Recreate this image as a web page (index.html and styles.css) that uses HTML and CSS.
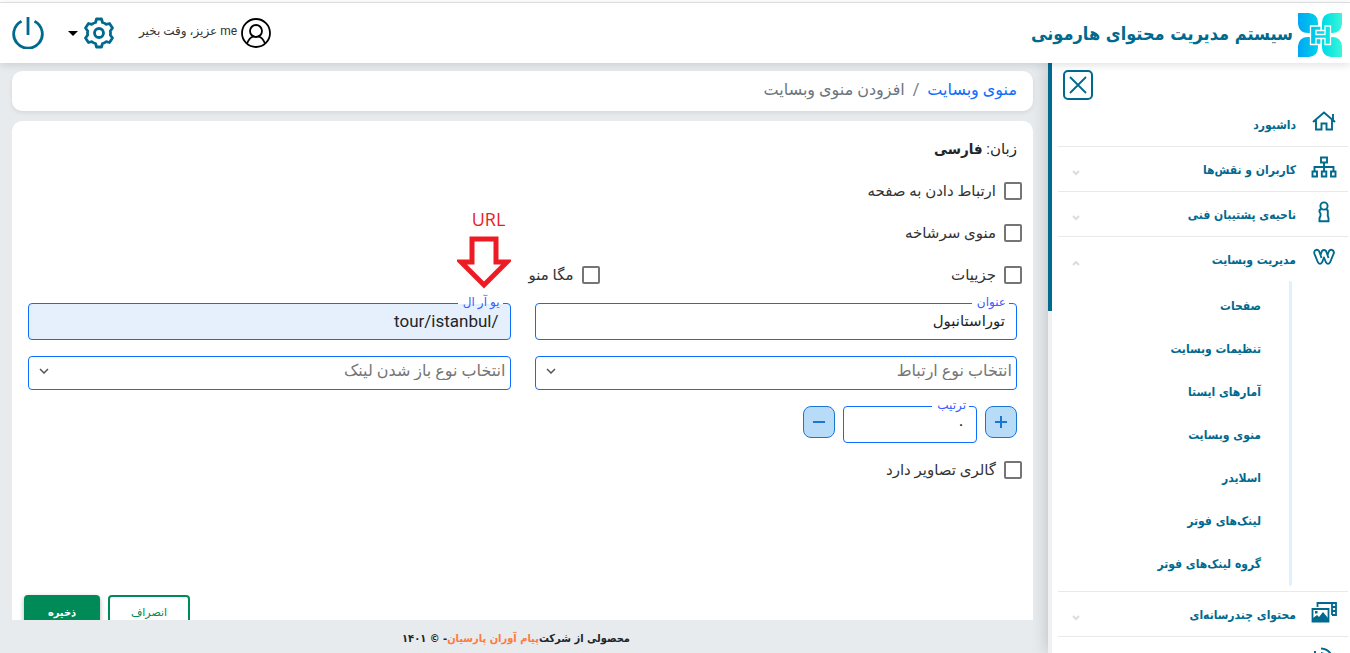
FILE: index.html
```html
<!DOCTYPE html>
<html lang="fa" dir="rtl">
<head>
    <meta charset="UTF-8">
    <meta name="viewport" content="width=device-width, initial-scale=1.0">
    <title>سیستم مدیریت محتوای هارمونی</title>
    <link rel="stylesheet" href="styles.css">
</head>
<body>
    <header class="topbar">
        <div class="brand">
            <svg class="brand-logo" viewBox="0 0 44 44" aria-hidden="true">
                <defs>
                    <linearGradient id="logoFill" gradientUnits="userSpaceOnUse" x1="0" x2="44" y1="0" y2="0">
                        <stop offset="0" stop-color="#00a6f5"/>
                        <stop offset="0.6" stop-color="#00dfe4"/>
                        <stop offset="1" stop-color="#3df5d8"/>
                    </linearGradient>
                </defs>
                <path fill="url(#logoFill)" d="M0 0H11Q20 1 20 10V20H10Q1 20 0 11ZM44 0H33Q24 1 24 10V20H34Q43 20 44 11ZM0 44H11Q20 43 20 34V24H10Q1 24 0 33ZM44 44H33Q24 43 24 34V24H34Q43 24 44 33Z"/>
                <path fill="url(#logoFill)" stroke="#fff" stroke-width="1.300" d="M12.500 13H23V17.500H27V13H32.500V31.500H27V25.500H23V31.500H12.500Z"/>
                <path fill="none" stroke="#fff" stroke-width="1.300" d="M23 17.500H18V21.500H27V17.500M18 31V25.500H23"/>
            </svg>
            <h1 class="brand-title">سیستم مدیریت محتوای هارمونی</h1>
        </div>
        <div class="user-tools">
            <div class="user">
                <svg class="user-icon" viewBox="0 0 30 30" fill="none" stroke="#000" stroke-width="1.800" aria-hidden="true">
                    <circle cx="15" cy="15" r="14"/>
                    <circle cx="15" cy="13" r="6"/>
                    <path d="M6 25.500C8 20.500 10.500 18.800 12.500 18.300M24 25.500C22 20.500 19.500 18.800 17.500 18.300"/>
                </svg>
                <span class="user-name">me عزیز، وقت بخیر</span>
            </div>
            <button class="icon-button settings" type="button" aria-label="تنظیمات">
                <svg class="gear" viewBox="0 0 32 32" fill="none" stroke="#006a8e" stroke-width="2.800" stroke-linejoin="round" aria-hidden="true">
                    <path d="M13.500 2H18.500L19.500 5.500Q21.500 6 23 7.300L26.500 6.500L29.500 11L27.300 14Q27.800 16 27.300 18L29.500 21L26.500 25.500L23 24.700Q21.500 26 19.500 26.500L18.500 30H13.500L12.500 26.500Q10.500 26 9 24.700L5.500 25.500L2.500 21L4.700 18Q4.200 16 4.700 14L2.500 11L5.500 6.500L9 7.300Q10.500 6 12.500 5.500Z"/>
                    <circle cx="16" cy="16" r="4.500"/>
                </svg>
                <span class="caret"></span>
            </button>
            <button class="icon-button" type="button" aria-label="خروج">
                <svg class="power" viewBox="0 0 32 32" fill="none" stroke="#006a8e" stroke-width="2.800" aria-hidden="true">
                    <path d="M16 0V18M9.500 4.200A14.300 14.300 0 1 0 22.500 4.200"/>
                </svg>
            </button>
        </div>
    </header>

    <div class="layout">
        <aside class="sidebar">
            <nav class="menu">
                <button class="close-button" type="button" aria-label="بستن منو">
                    <svg viewBox="0 0 18 18" fill="none" stroke="#006a8e" stroke-width="1.800" aria-hidden="true"><path d="M1 1L17 17M17 1L1 17"/></svg>
                </button>
                <a class="menu-item first" href="#">
                    <svg class="menu-icon" viewBox="0 0 26 22" fill="none" stroke="#006a8e" stroke-width="1.900" aria-hidden="true">
                        <path d="M2 12L13 2.500L24 12M5 10V19.500H10.500V13.500H15.500V19.500H21V10M22 10V4"/>
                    </svg>
                    <span>داشبورد</span>
                </a>
                <a class="menu-item" href="#">
                    <svg class="menu-icon" viewBox="0 0 26 22" fill="none" stroke="#006a8e" stroke-width="1.900" aria-hidden="true">
                        <path d="M10 1.500H16V6.500H10ZM13 6.500V15M3.500 15V11H22.500V15M1.500 15.500H6V20.500H1.500ZM10.800 15.500H15.300V20.500H10.800ZM20 15.500H24.500V20.500H20Z"/>
                    </svg>
                    <span>کاربران و نقش‌ها</span>
                    <svg class="arrow" viewBox="0 0 8 6" aria-hidden="true"><path d="M1 1L4 4L7 1"/></svg>
                </a>
                <a class="menu-item" href="#">
                    <svg class="menu-icon" viewBox="0 0 26 22" fill="none" stroke="#006a8e" stroke-width="1.900" aria-hidden="true">
                        <circle cx="13" cy="5" r="3.600"/>
                        <path d="M10.500 8Q8 8.500 8.500 11L9.500 12.500V15L8.500 17V20.300H17.500V17L16.800 15V9.500L15 8"/>
                    </svg>
                    <span>ناحیه‌ی پشتیبان فنی</span>
                    <svg class="arrow" viewBox="0 0 8 6" aria-hidden="true"><path d="M1 1L4 4L7 1"/></svg>
                </a>
                <a class="menu-item open" href="#">
                    <svg class="menu-icon" viewBox="0 0 26 22" fill="none" stroke="#006a8e" stroke-width="1.900" stroke-linejoin="round" aria-hidden="true">
                        <path d="M4 4.500Q6.500 3 8 5L9.500 9L11 5Q13 3 15 5L16.500 9L18 5Q19.500 3 22 4.500Q23.500 6 22.500 8L19 16.500Q17 19 15 16.500L13 11.500L11 16.500Q9 19 7 16.500L3.500 8Q2.800 6 4 4.500ZM9.500 9L10.500 12M16.500 9L17.500 12"/>
                    </svg>
                    <span>مدیریت وبسایت</span>
                    <svg class="arrow" viewBox="0 0 8 6" aria-hidden="true"><path d="M1 5L4 2L7 5"/></svg>
                </a>
                <div class="submenu">
                    <a href="#">صفحات</a>
                    <a href="#">تنظیمات وبسایت</a>
                    <a href="#">آمارهای ایستا</a>
                    <a href="#">منوی وبسایت</a>
                    <a href="#">اسلایدر</a>
                    <a href="#">لینک‌های فوتر</a>
                    <a href="#">گروه لینک‌های فوتر</a>
                </div>
                <a class="menu-item" href="#">
                    <svg class="menu-icon" viewBox="0 0 26 22" fill="none" stroke="#006a8e" stroke-width="1.800" aria-hidden="true">
                        <path d="M6.500 6V2H25V14H21M21 2V14M21 6H25M21 10H25"/>
                        <path d="M1.500 8H17.500V20.500H1.500Z"/>
                        <path fill="#006a8e" stroke="none" d="M2 20V17L6 14L8 16L12 11L17 17V20ZM4 10H6.500V12.500H4Z"/>
                    </svg>
                    <span>محتوای چندرسانه‌ای</span>
                    <svg class="arrow" viewBox="0 0 8 6" aria-hidden="true"><path d="M1 1L4 4L7 1"/></svg>
                </a>
                <a class="menu-item" href="#">
                    <svg class="menu-icon" viewBox="0 0 26 22" fill="none" stroke="#006a8e" stroke-width="2" aria-hidden="true">
                        <path d="M4 5V21M10 2.500Q20 3 22.500 15M10 7Q16 8 18 16"/>
                    </svg>
                    <span>ارتباطات</span>
                </a>
            </nav>
            <div class="scroll-track"><div class="scroll-thumb"></div></div>
        </aside>

        <main class="main">
            <div class="content">
                <nav class="breadcrumb">
                    <a href="#">منوی وبسایت</a>
                    <span>/</span>
                    <span>افزودن منوی وبسایت</span>
                </nav>

                <form class="card">
                    <p class="language">زبان: <strong>فارسی</strong></p>
                    <div class="form-grid">
                        <label class="check full"><input type="checkbox">ارتباط دادن به صفحه</label>
                        <label class="check full"><input type="checkbox">منوی سرشاخه</label>
                        <label class="check"><input type="checkbox">جزییات</label>
                        <label class="check mega"><input type="checkbox">مگا منو</label>
                    </div>
                    <div class="form-grid fields">
                        <div class="field">
                            <label for="title">عنوان</label>
                            <input type="text" id="title" value="توراستانبول">
                        </div>
                        <div class="field autofilled">
                            <label for="url">یو آر ال</label>
                            <input type="text" id="url" value="/tour/istanbul">
                            <div class="hint">
                                <span>URL</span>
                                <svg viewBox="0 0 54 53" fill="#fff" stroke="#ed1c24" stroke-width="5" aria-hidden="true">
                                    <path d="M15 3H39V26H50L27 49L4 26H15Z"/>
                                </svg>
                            </div>
                        </div>
                        <div class="select-box">
                            <select id="relation" aria-label="انتخاب نوع ارتباط"><option>انتخاب نوع ارتباط</option></select>
                            <svg viewBox="0 0 10 6" aria-hidden="true"><path d="M1 1L5 5L9 1"/></svg>
                        </div>
                        <div class="select-box">
                            <select id="target" aria-label="انتخاب نوع باز شدن لینک"><option>انتخاب نوع باز شدن لینک</option></select>
                            <svg viewBox="0 0 10 6" aria-hidden="true"><path d="M1 1L5 5L9 1"/></svg>
                        </div>
                    </div>
                    <div class="stepper">
                        <button type="button" aria-label="افزایش"><svg viewBox="0 0 14 14" aria-hidden="true"><path d="M1 7H13M7 1V13"/></svg></button>
                        <div class="field order">
                            <label for="order">ترتیب</label>
                            <input type="text" id="order" value="۰">
                        </div>
                        <button type="button" aria-label="کاهش"><svg viewBox="0 0 14 14" aria-hidden="true"><path d="M1 7H13"/></svg></button>
                    </div>
                    <label class="check gallery"><input type="checkbox">گالری تصاویر دارد</label>
                    <div class="actions">
                        <button class="btn btn-outline" type="button">انصراف</button>
                        <button class="btn btn-save" type="submit">ذخیره</button>
                    </div>
                </form>
            </div>
            <footer class="footer">محصولی از شرکت&zwnj;<a href="#">پیام آوران پارسیان</a>- © ۱۴۰۱</footer>
        </main>
    </div>
</body>
</html>
```

FILE: styles.css
```css
* {
    box-sizing: border-box;
}
body {
    margin: 0;
    height: 100vh;
    display: flex;
    flex-direction: column;
    overflow: hidden;
    font-family: Roboto, "DejaVu Sans", sans-serif;
    font-size: 15px;
    color: #212529;
    background-color: #e7ebee;
}
a {
    text-decoration: none;
}
button,
input,
select {
    font-family: inherit;
}
.brand-title,
.menu-item,
.submenu a,
.language strong,
.btn-save,
.footer {
    font-family: "DejaVu Sans Condensed", "DejaVu Sans", sans-serif;
    font-weight: bold;
}

/* top bar */
.topbar {
    position: relative;
    z-index: 2;
    flex: none;
    display: flex;
    align-items: center;
    justify-content: space-between;
    height: 61px;
    margin-top: 2px;
    padding: 0 8px 0 12px;
    border-top: 1px solid #dadce0;
    background-color: #fff;
    box-shadow: 0 2px 8px rgba(0, 0, 0, 0.12), 0 -2px 0 #fff;
}
.brand,
.user-tools,
.user,
.settings {
    display: flex;
    align-items: center;
}
.brand {
    gap: 5px;
}
.brand-logo {
    width: 44px;
    height: 44px;
    margin-top: 4px;
}
.brand-title {
    margin: 0;
    font-size: 18px;
    color: #006a8e;
}
.user {
    gap: 4px;
    margin-left: 24px;
}
.user-icon {
    width: 30px;
    height: 30px;
}
.user-name {
    margin-bottom: 4px;
    font-size: 12px;
    color: #333;
}
.icon-button {
    border: 0;
    padding: 0;
    background: none;
    cursor: pointer;
}
.settings {
    gap: 5px;
    margin-left: 24px;
}
.gear,
.power {
    display: block;
    width: 32px;
    height: 32px;
}
.caret {
    border: 5px solid transparent;
    border-top-color: #000;
    border-bottom: 0;
}

/* sidebar */
.layout {
    flex: 1;
    min-height: 0;
    display: flex;
}
.sidebar {
    position: relative;
    z-index: 1;
    flex: none;
    width: 302px;
    display: flex;
    background-color: #fff;
    box-shadow: 0 0 16px rgba(0, 0, 0, 0.2);
    overflow: hidden;
}
.menu {
    flex: 1;
    padding: 7px 2px 0 6px;
    overflow: hidden;
}
.close-button {
    display: flex;
    align-items: center;
    justify-content: center;
    width: 30px;
    height: 30px;
    margin: 0 auto 1px 5px;
    padding: 0;
    border: 2px solid #006a8e;
    border-radius: 5px;
    background: none;
}
.close-button svg {
    flex: none;
    width: 18px;
    height: 18px;
}
.menu-item {
    display: flex;
    align-items: center;
    gap: 15px;
    height: 45px;
    padding: 2px 11px 0 14px;
    border-top: 1px solid #e9e9e9;
    color: #006a8e;
    font-size: 12px;
}
.menu-item.first {
    border-top: 0;
}
.menu-icon {
    flex: none;
    width: 26px;
    height: 22px;
    margin-bottom: 7px;
}
.arrow {
    width: 8px;
    height: 6px;
    margin-right: auto;
    margin-top: 6px;
    fill: none;
    stroke: #dcdcdc;
    stroke-width: 2;
}
.submenu {
    margin: 0 56px 5px 0;
    padding: 4px 28px 0 0;
    border-right: 3px solid #ddf2fd;
    border-radius: 2px;
}
.submenu a {
    display: block;
    line-height: 43px;
    color: #006a8e;
    font-size: 12px;
}
.scroll-track {
    width: 4px;
    background-color: #f1f1f1;
}
.scroll-thumb {
    height: 42%;
    background-color: #006a8e;
}

/* main area */
.main {
    flex: 1;
    min-width: 0;
    display: flex;
    flex-direction: column;
}
.content {
    flex: 1;
    min-height: 0;
    overflow: hidden;
    padding: 8px 15px 0 12px;
}
.breadcrumb {
    display: flex;
    align-items: center;
    gap: 8px;
    height: 40px;
    padding: 0 16px 4px;
    border-radius: 10px;
    background-color: #fff;
    box-shadow: 0 2px 4px rgba(0, 0, 0, 0.08);
    font-size: 16px;
    color: #6c757d;
}
.breadcrumb a {
    color: #0d6efd;
}
.card {
    height: 560px;
    margin-top: 10px;
    padding: 16px;
    border-radius: 10px 10px 0 0;
    background-color: #fff;
}
.language {
    margin: 0 0 9px;
    line-height: 24px;
}
.form-grid {
    display: grid;
    grid-template-columns: 1fr 1fr;
    column-gap: 24px;
}
.full {
    grid-column: 1 / -1;
}
.check {
    display: flex;
    align-items: center;
    gap: 8px;
    height: 42px;
    margin-right: -5px;
    color: #333;
}
.check input {
    appearance: none;
    width: 18px;
    height: 18px;
    margin: 0;
    border: 2px solid #757575;
    border-radius: 2px;
    background-color: #fff;
}
.mega {
    margin-right: -89px;
}
.fields {
    margin-top: 7px;
    row-gap: 16px;
}
.field {
    position: relative;
}
.field label {
    position: absolute;
    top: -10px;
    right: 8px;
    padding: 0 3px 0 5px;
    line-height: 18px;
    font-size: 12px;
    color: #3b5bfd;
    background-color: #fff;
}
.field input {
    display: block;
    width: 100%;
    height: 37px;
    padding: 0 11px 2px;
    border: 1px solid #0d6efd;
    border-radius: 4px;
    font-size: 15px;
    color: #212529;
    background-color: #fff;
}
.field.autofilled input {
    font-size: 17px;
    background-color: #e6f0fd;
}
.autofilled label {
    background: linear-gradient(#fff 60%, #e6f0fd 60%);
}
.hint {
    position: absolute;
    right: 0;
    bottom: 51px;
    display: flex;
    flex-direction: column;
    align-items: center;
    gap: 5px;
    font-family: "Open Sans", sans-serif;
    font-size: 18px;
    line-height: 24px;
    color: #ed1c24;
}
.hint span {
    padding-left: 10px;
}
.hint svg {
    width: 54px;
    height: 53px;
}
.select-box {
    position: relative;
}
.select-box select {
    appearance: none;
    display: block;
    width: 100%;
    height: 34px;
    padding: 0 4px 6px 24px;
    border: 1px solid #0d6efd;
    border-radius: 4px;
    font-size: 16px;
    color: #757575;
    background-color: #fff;
}
.select-box svg {
    position: absolute;
    left: 11px;
    top: 12px;
    width: 10px;
    height: 6px;
    fill: none;
    stroke: #555;
    stroke-width: 1.500;
}
.stepper {
    display: flex;
    gap: 8px;
    margin-top: 16px;
}
.stepper button {
    display: flex;
    align-items: center;
    justify-content: center;
    width: 32px;
    height: 32px;
    padding: 0;
    border: 1px solid #1976d2;
    border-radius: 8px;
    background-color: #b8dcf8;
}
.stepper button svg {
    width: 14px;
    height: 14px;
    stroke: #1976d2;
    stroke-width: 2;
}
.order {
    width: 134px;
}
.gallery {
    margin-top: 6px;
}
.actions {
    display: flex;
    justify-content: flex-end;
    gap: 8px;
    margin: 104px 0 0 -4px;
}
.btn {
    height: 38px;
    padding: 0 0 3px;
    border: 2px solid #008a57;
    border-radius: 4px;
    font-size: 11px;
    color: #008a57;
    background-color: #fff;
}
.btn-outline {
    width: 82px;
}
.btn-save {
    width: 76px;
    color: #fff;
    background-color: #008a57;
    box-shadow: 0 2px 5px rgba(0, 0, 0, 0.3);
}

/* footer */
.footer {
    flex: none;
    height: 33px;
    padding-right: 16px;
    line-height: 38px;
    text-align: center;
    font-size: 11px;
}
.footer a {
    color: #ff7a3d;
}
```
